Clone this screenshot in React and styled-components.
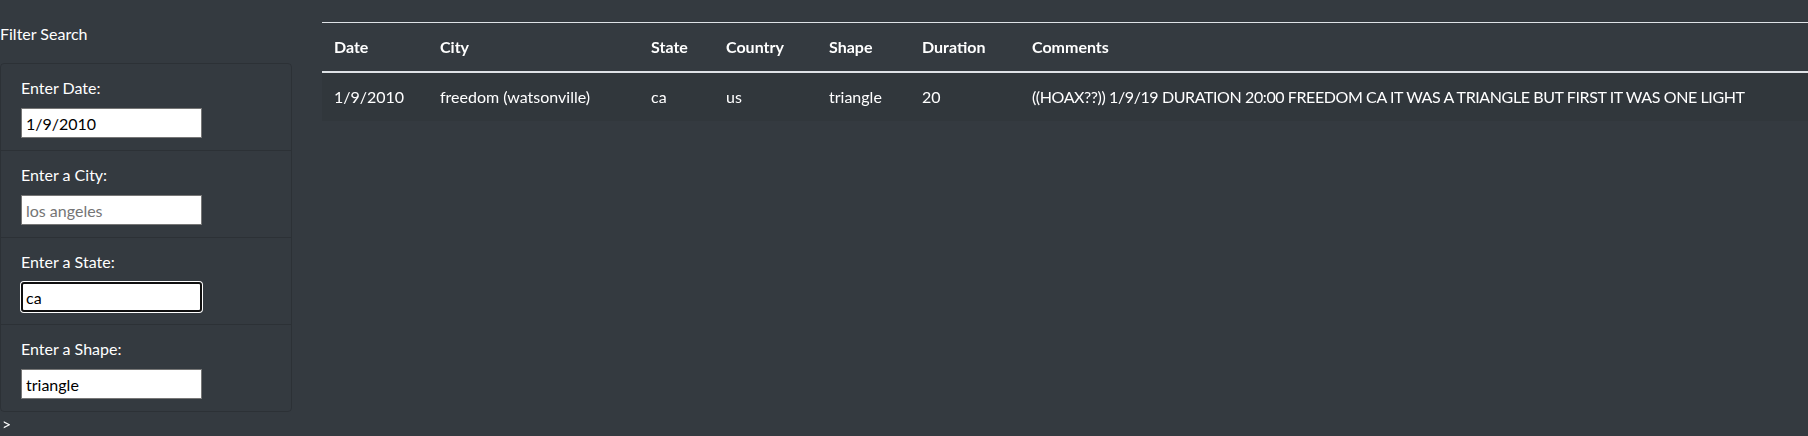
import styled, { createGlobalStyle } from "styled-components";

const GlobalStyle = createGlobalStyle`
  html, body {
    margin: 0;
    padding: 0;
    background: #343a40;
  }

  body {
    font-family: Lato, "Liberation Sans", Arial, sans-serif;
    font-size: 16px;
    line-height: 24px;
    color: #fff;
  }

  * {
    box-sizing: border-box;
  }
`;

const Page = styled.div`
  display: flex;
  align-items: flex-start;
  gap: 30px;
  padding-top: 22px;
  min-height: 436px;
  background: #343a40;
`;

const Sidebar = styled.aside`
  width: 292px;
  flex-shrink: 0;
`;

const SideTitle = styled.div`
  line-height: 24px;
  margin-bottom: 17px;
`;

const FilterList = styled.ul`
  list-style: none;
  margin: 0;
  padding: 0;
  border: 1px solid rgba(0, 0, 0, 0.15);
  border-radius: 4px;
`;

const FilterItem = styled.li`
  padding: 12px 20px;

  & + & {
    border-top: 1px solid rgba(0, 0, 0, 0.15);
  }
`;

const Label = styled.label`
  display: block;
  margin-bottom: 8px;
  line-height: 24px;
`;

const Input = styled.input`
  display: block;
  width: 181px;
  height: 30px;
  margin: 0;
  padding: 1px 4px;
  font: inherit;
  font-size: 16px;
  color: #000;
  background: #fff;
  border: ${(p) => (p.$focused ? "2px solid #101010" : "1px solid #767676")};
  border-radius: ${(p) => (p.$focused ? "3px" : "0")};
  box-shadow: ${(p) => (p.$focused ? "0 0 0 1px #fff" : "none")};
  padding-left: ${(p) => (p.$focused ? "3px" : "4px")};
  outline: none;

  &::placeholder {
    color: #757575;
  }
`;

const Trailing = styled.div`
  padding-left: 2px;
  line-height: 24px;
`;

const Main = styled.main`
  flex: 1;
  min-width: 0;
`;

const Table = styled.table`
  width: 100%;
  table-layout: fixed;
  border-collapse: collapse;
  color: #fff;
`;

const Th = styled.th`
  width: ${(p) => (p.$w ? `${p.$w}px` : "auto")};
  padding: 12px;
  text-align: left;
  font-weight: 700;
  vertical-align: bottom;
  border-top: 1px solid #dee2e6;
  border-bottom: 2px solid #dee2e6;
  white-space: nowrap;
`;

const Row = styled.tr`
  background: rgba(0, 0, 0, 0.05);
`;

const Td = styled.td`
  padding: 12px;
  vertical-align: top;
  white-space: nowrap;
  letter-spacing: ${(p) => (p.$tight ? "-0.4px" : "normal")};
`;

const filters = [
  { label: "Enter Date:", value: "1/9/2010" },
  { label: "Enter a City:", placeholder: "los angeles" },
  { label: "Enter a State:", value: "ca", focused: true },
  { label: "Enter a Shape:", value: "triangle" },
];

const columns = [
  { title: "Date", w: 106 },
  { title: "City", w: 211 },
  { title: "State", w: 75 },
  { title: "Country", w: 103 },
  { title: "Shape", w: 93 },
  { title: "Duration", w: 110 },
  { title: "Comments" },
];

const rows = [
  [
    "1/9/2010",
    "freedom (watsonville)",
    "ca",
    "us",
    "triangle",
    "20",
    "((HOAX??)) 1/9/19 DURATION 20:00 FREEDOM CA IT WAS A TRIANGLE BUT FIRST IT WAS ONE LIGHT",
  ],
];

const App = () => {
  return (
    <>
      <GlobalStyle />
      <Page>
        <Sidebar>
          <SideTitle>Filter Search</SideTitle>
          <FilterList>
            {filters.map((f) => (
              <FilterItem key={f.label}>
                <Label>{f.label}</Label>
                <Input
                  type="text"
                  defaultValue={f.value}
                  placeholder={f.placeholder}
                  $focused={f.focused}
                  autoFocus={f.focused}
                />
              </FilterItem>
            ))}
          </FilterList>
          <Trailing>&gt;</Trailing>
        </Sidebar>

        <Main>
          <Table>
            <thead>
              <tr>
                {columns.map((c) => (
                  <Th key={c.title} $w={c.w}>
                    {c.title}
                  </Th>
                ))}
              </tr>
            </thead>
            <tbody>
              {rows.map((r, i) => (
                <Row key={i}>
                  {r.map((cell, j) => (
                    <Td key={j} $tight={j === r.length - 1}>
                      {cell}
                    </Td>
                  ))}
                </Row>
              ))}
            </tbody>
          </Table>
        </Main>
      </Page>
    </>
  );
};

export default App;
